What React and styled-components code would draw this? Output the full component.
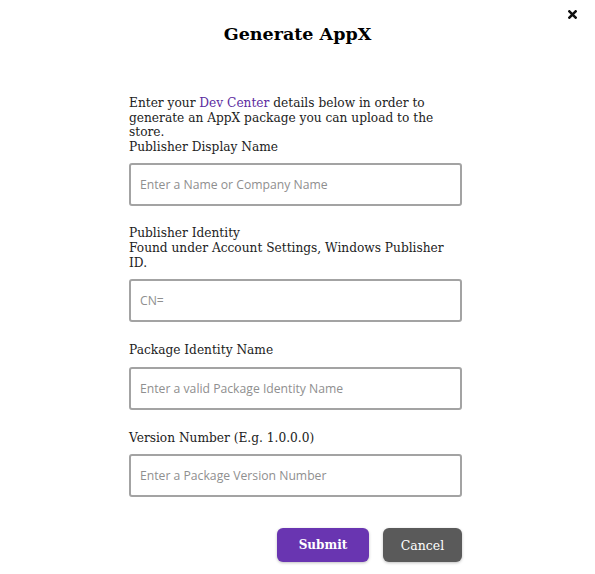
import React from "react";
import styled, { createGlobalStyle } from "styled-components";

const GlobalStyle = createGlobalStyle`
  body {
    margin: 0;
    background: #fff;
    font-family: "DejaVu Serif", "Liberation Serif", serif;
    color: #222;
  }
`;

const Modal = styled.div`
  position: relative;
  width: 595px;
  height: 574px;
  box-sizing: border-box;
  padding-top: 22px;
`;

const CloseButton = styled.button`
  position: absolute;
  top: 9px;
  right: 17px;
  width: 11px;
  height: 11px;
  padding: 0;
  border: none;
  background: none;
  cursor: pointer;
  display: flex;
  align-items: center;
  justify-content: center;
`;

const Title = styled.h1`
  margin: 0;
  text-align: center;
  font-size: 17.5px;
  font-weight: bold;
  color: #000;
  line-height: 24px;
`;

const Form = styled.form`
  width: 333px;
  margin: 50px 0 0 129px;
  display: flex;
  flex-direction: column;
`;

const Intro = styled.p`
  margin: 0;
  font-size: 12.2px;
  line-height: 14.6px;
`;

const DevLink = styled.a`
  color: #5b2ca0;
  text-decoration: none;
`;

const Field = styled.div`
  display: flex;
  flex-direction: column;
  margin-top: ${(p) => p.$gap || 0}px;
`;

const Label = styled.label`
  font-size: 12.2px;
  line-height: 14.6px;
  margin-bottom: 9px;
`;

const Input = styled.input`
  box-sizing: border-box;
  width: 100%;
  height: 43px;
  border: 2px solid #a3a3a3;
  border-radius: 3px;
  padding: 0 9px;
  font-family: "Open Sans", "Noto Sans", sans-serif;
  font-size: 12.2px;
  color: #333;
  outline: none;

  &::placeholder {
    color: #8f8f8f;
  }
`;

const Actions = styled.div`
  display: flex;
  justify-content: flex-end;
  gap: 14px;
  margin-top: 31px;
`;

const Button = styled.button`
  height: 34px;
  width: ${(p) => p.$width}px;
  border: none;
  border-radius: 6px;
  background: ${(p) => p.$bg};
  color: #fff;
  font-family: "DejaVu Serif", "Liberation Serif", serif;
  font-size: ${(p) => (p.$bold ? 12 : 12.5)}px;
  font-weight: ${(p) => (p.$bold ? "bold" : "normal")};
  box-shadow: 0 1px 3px rgba(0, 0, 0, 0.25);
  cursor: pointer;
`;

export default function App() {
  return (
    <>
      <GlobalStyle />
      <Modal>
        <CloseButton aria-label="Close">
          <svg width="9" height="9" viewBox="0 0 10 10">
            <path
              d="M1.5 1.5 L8.5 8.5 M8.5 1.5 L1.5 8.5"
              stroke="#111"
              strokeWidth="2.8"
              strokeLinecap="square"
            />
          </svg>
        </CloseButton>
        <Title>Generate AppX</Title>
        <Form onSubmit={(e) => e.preventDefault()}>
          <Intro>
            Enter your <DevLink href="#">Dev Center</DevLink> details below in
            order to generate an AppX package you can upload to the store.
          </Intro>
          <Field>
            <Label>Publisher Display Name</Label>
            <Input placeholder="Enter a Name or Company Name" />
          </Field>
          <Field $gap={20}>
            <Label>
              Publisher Identity
              <br />
              Found under Account Settings, Windows Publisher ID.
            </Label>
            <Input placeholder="CN=" />
          </Field>
          <Field $gap={21}>
            <Label>Package Identity Name</Label>
            <Input placeholder="Enter a valid Package Identity Name" />
          </Field>
          <Field $gap={21}>
            <Label>Version Number (E.g. 1.0.0.0)</Label>
            <Input placeholder="Enter a Package Version Number" />
          </Field>
          <Actions>
            <Button $bg="#6935b1" $width={92} $bold>
              Submit
            </Button>
            <Button $bg="#5a5a5a" $width={79}>
              Cancel
            </Button>
          </Actions>
        </Form>
      </Modal>
    </>
  );
}
